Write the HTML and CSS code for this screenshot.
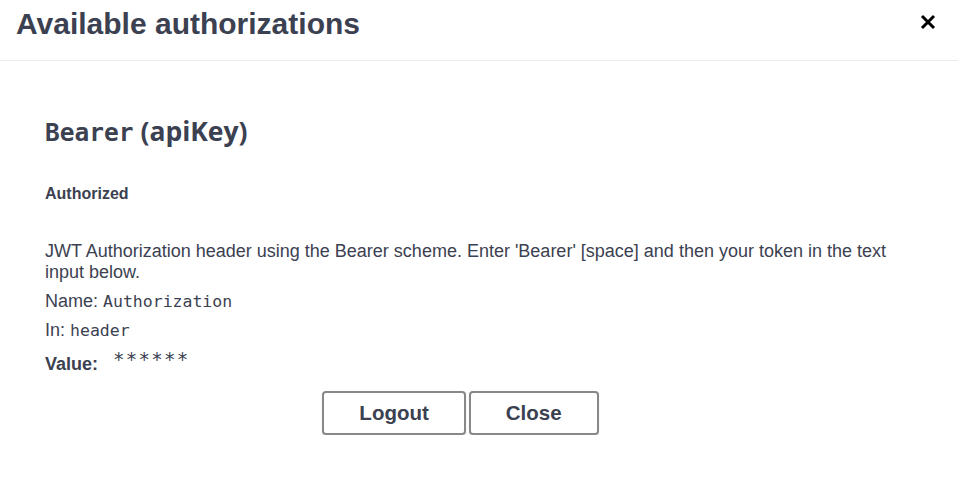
FILE: index.html
```html
<!DOCTYPE html>
<html>
<head>
<meta charset="utf-8">
<link rel="stylesheet" href="styles.css">
</head>
<body>
<div class="modal">
  <div class="modal-header">
    <h3 class="title">Available authorizations</h3>
    <button class="close-x" aria-label="Close">
      <svg width="16" height="16" viewBox="0 0 16 16"><path d="M2 2 L14 14 M14 2 L2 14" stroke="#000" stroke-width="3" stroke-linecap="butt"/></svg>
    </button>
  </div>
  <div class="modal-body">
    <h4 class="scheme"><code class="scheme-name">Bearer</code> (apiKey)</h4>
    <h6 class="status">Authorized</h6>
    <p class="desc">JWT Authorization header using the Bearer scheme. Enter 'Bearer' [space] and then your token in the text input below.</p>
    <p class="row row-name">Name: <code>Authorization</code></p>
    <p class="row row-in">In: <code>header</code></p>
    <div class="value-row"><span class="value-label">Value:</span><code class="stars">******</code></div>
    <div class="actions">
      <button class="btn">Logout</button>
      <button class="btn">Close</button>
    </div>
  </div>
</div>
</body>
</html>
```

FILE: styles.css
```css
html, body {
  margin: 0;
  padding: 0;
  background: #fff;
}
body {
  font-family: "Liberation Sans", Arial, sans-serif;
  color: #3b4151;
}
.modal {
  width: 958px;
}
.modal-header {
  display: flex;
  align-items: center;
  justify-content: space-between;
  height: 60px;
  border-bottom: 1px solid #ebebeb;
  padding: 0 22px 0 16px;
}
.title {
  margin: 0;
  font-size: 30px;
  line-height: 36px;
  font-weight: 700;
  color: #3b4151;
  position: relative;
  top: -6px;
}
.close-x {
  border: none;
  background: none;
  padding: 0;
  width: 16px;
  height: 16px;
  display: flex;
  position: relative;
  top: -8px;
}
.modal-body {
  padding: 0 82px 0 45px;
}
.scheme {
  margin: 54px 0 0;
  font-size: 26.5px;
  font-weight: 700;
  font-family: "Open Sans", "Liberation Sans", sans-serif;
  line-height: 32px;
  color: #3b4151;
}
.scheme-name {
  font-family: "DejaVu Sans Mono", monospace;
  font-size: 24.5px;
  font-weight: 700;
}
.status {
  margin: 35px 0 0;
  font-size: 16px;
  font-weight: 700;
  line-height: 20px;
}
.desc {
  margin: 37px -29px 0 0;
  font-size: 18px;
  line-height: 21px;
}
.row {
  margin: 7px 0 0;
  font-size: 18px;
  line-height: 22px;
}
.row-in {
  margin-top: 6px;
}
.row code, .stars {
  font-family: "DejaVu Sans Mono", monospace;
  font-size: 16.5px;
  color: #3b4151;
}
.value-row {
  margin-top: 9px;
  display: flex;
  align-items: baseline;
  gap: 15px;
  font-size: 18px;
  line-height: 24px;
}
.value-label {
  font-weight: 700;
}
.stars {
  font-size: 19px;
  letter-spacing: 1.3px;
  position: relative;
  top: -4px;
}
.actions {
  display: flex;
  justify-content: center;
  gap: 3px;
  margin-top: 15px;
}
.btn {
  font-family: "Liberation Sans", Arial, sans-serif;
  font-size: 20.5px;
  font-weight: 700;
  color: #3b4151;
  background: #fff;
  border: 2px solid #888;
  border-radius: 4px;
  height: 44px;
  padding: 0 35px;
  box-shadow: 0 1px 2px rgba(0,0,0,0.1);
}
```
